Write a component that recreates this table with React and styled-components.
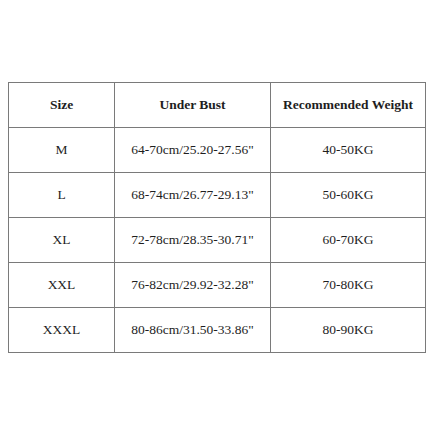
import React from 'react';
import styled, { createGlobalStyle } from 'styled-components';

const GlobalStyle = createGlobalStyle`
  html, body {
    margin: 0;
    padding: 0;
    background: #ffffff;
  }
`;

const Page = styled.div`
  width: 433px;
  height: 433px;
  box-sizing: border-box;
  padding: 82px 0 0 8px;
  background: #ffffff;
`;

const Table = styled.table`
  border-collapse: collapse;
  table-layout: fixed;
  width: 417px;
  font-family: "Liberation Serif", "Times New Roman", serif;
  font-size: 13.5px;
  color: #1e1e1e;
`;

const Cell = styled.td`
  border: 1px solid #7a7a7a;
  height: 44px;
  padding: 0;
  text-align: center;
  vertical-align: middle;
  font-weight: ${p => (p.$head ? 700 : 400)};
`;

const rows = [
  ['M', '64-70cm/25.20-27.56"', '40-50KG'],
  ['L', '68-74cm/26.77-29.13"', '50-60KG'],
  ['XL', '72-78cm/28.35-30.71"', '60-70KG'],
  ['XXL', '76-82cm/29.92-32.28"', '70-80KG'],
  ['XXXL', '80-86cm/31.50-33.86"', '80-90KG'],
];

export default function App() {
  return (
    <Page>
      <GlobalStyle />
      <Table>
        <colgroup>
          <col style={{ width: 106 }} />
          <col style={{ width: 156 }} />
          <col style={{ width: 155 }} />
        </colgroup>
        <tbody>
          <tr>
            <Cell $head>Size</Cell>
            <Cell $head>Under Bust</Cell>
            <Cell $head>Recommended Weight</Cell>
          </tr>
          {rows.map(r => (
            <tr key={r[0]}>
              {r.map((v, i) => (
                <Cell key={i}>{v}</Cell>
              ))}
            </tr>
          ))}
        </tbody>
      </Table>
    </Page>
  );
}
